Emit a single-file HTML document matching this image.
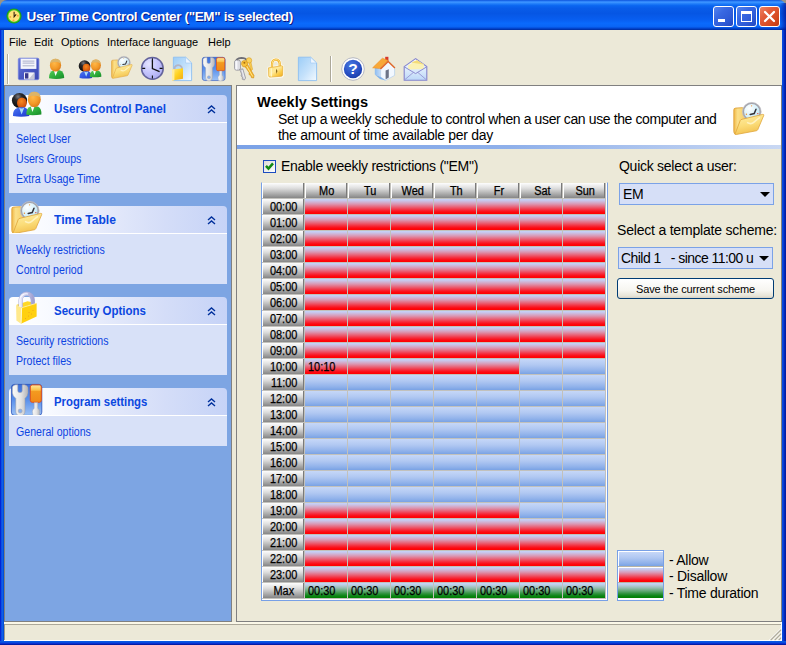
<!DOCTYPE html><html lang="en"><head><meta charset="utf-8"><title>User Time Control Center</title><style>
*{box-sizing:border-box;margin:0;padding:0}
html,body{width:786px;height:645px;overflow:hidden;background:#ECE9D8}
body{position:relative;font-family:"Liberation Sans", "DejaVu Sans", sans-serif;font-size:11px;color:#000}
.abs{position:absolute}
#corner{position:absolute;left:0;top:0;width:786px;height:10px;background:#9a9384}
#title{position:absolute;left:0;top:0;width:786px;height:30px;border-radius:7px 7px 0 0;
 background:linear-gradient(to bottom,#0a50d8 0%,#2c80f8 4%,#3a93ff 8%,#1e7cf8 13%,#0a66f0 19%,#085ce8 28%,#0656e4 45%,#085ef0 65%,#0a6afc 78%,#0a66f6 88%,#0450de 93%,#0038b8 97%,#002c9c 100%);}
#title .t{position:absolute;left:26.5px;top:9px;font-weight:bold;font-size:13.5px;line-height:16px;color:#fff;white-space:nowrap;text-shadow:1px 1px 0 #0a1883;letter-spacing:-0.36px}
.bl{position:absolute;left:0;top:30px;width:4px;height:611px;background:linear-gradient(to right,#0019cf 0,#0831d9 25%,#166aee 50%,#0855dd 75%,#0048cf 100%)}
.br{position:absolute;left:782px;top:30px;width:4px;height:611px;background:linear-gradient(to right,#0950e2 0,#063ed4 35%,#0426b6 65%,#001a9c 100%)}
.bb{position:absolute;left:0;top:641px;width:786px;height:4px;background:linear-gradient(to bottom,#0a5ae8 0,#0855dd 30%,#0831d9 60%,#00138c 100%)}
.wb{position:absolute;top:6px;width:21px;height:21px;border:1px solid #fff;border-radius:3px;
 background:linear-gradient(135deg,#5484ee 0,#3868e2 35%,#2e5ad6 70%,#2246c0 100%)}
.wb.close{background:linear-gradient(135deg,#ee8262 0,#e25c3a 35%,#d64a20 70%,#c23a10 100%)}
.menu span{position:absolute;top:36px;line-height:13px;font-size:11px;white-space:nowrap}
.tbi{position:absolute}
#side{position:absolute;left:4px;top:85px;width:228px;height:537px;background:#7da5e3;border-left:1px solid #808080;border-top:1px solid #808080;border-right:1px solid #808080;border-bottom:1px solid #808080}
.ph{position:absolute;left:9px;width:218px;height:27px;border-radius:4px 4px 0 0;background:linear-gradient(to right,#ffffff 0,#f8faff 18%,#e6ebfb 42%,#d4ddf8 72%,#c6d3f7 100%)}
.ph b{position:absolute;left:45px;top:7px;font-size:12.5px;line-height:15px;color:#0c48e0;white-space:nowrap;transform:scaleX(.937);transform-origin:0 0}
.pb{position:absolute;left:9px;width:218px;background:#d8e1f8;border-top:1px solid #fff}
.lk{position:absolute;left:16px;font-size:12.5px;line-height:14px;color:#0c44e2;white-space:nowrap;transform:scaleX(.848);transform-origin:0 0}
.chev{position:absolute;left:198px;top:10px}
#main{position:absolute;left:236px;top:85px;width:546px;height:537px;border:1px solid #808080;background:#ECE9D8}
#hdr{position:absolute;left:237px;top:86px;width:544px;height:59px;background:#fff}
#hbar{position:absolute;left:237px;top:145px;width:544px;height:4px;background:linear-gradient(to right,#7ba2e7 0,#8fb0ea 50%,#c9d8f3 100%)}
.h1{position:absolute;left:257px;top:95px;font-weight:bold;font-size:14px;line-height:15px;white-space:nowrap;transform:scaleX(1.036);transform-origin:0 0}
.h2{position:absolute;left:278px;font-size:14px;line-height:15px;white-space:nowrap;letter-spacing:-.35px}
.lbl{position:absolute;font-size:14px;line-height:15px;white-space:nowrap;letter-spacing:-.27px}
#grid{position:absolute;left:261px;top:182px;width:347px;height:419px;background:#c2c1bc;border:1px solid #78a0e6;border-top-color:#ECE9D8}
.c{position:absolute;width:42px;height:15px;font-size:12.5px;line-height:17px;white-space:nowrap;overflow:hidden}
.c span{display:inline-block;transform:scaleX(.875);transform-origin:50% 50%;-webkit-text-stroke:.25px #000}
.c.t span{transform-origin:0 50%}
.h{background:linear-gradient(to bottom,#fdfdfd 0,#dedede 35%,#a8a8a8 75%,#868686 100%);text-align:center;padding-left:2px;box-shadow:inset 1px 0 0 #fff,inset -1px 0 0 #7a7a7a}
.r{background:linear-gradient(to bottom,#c4d4fa 0,#c9c4e8 12%,#da98b4 33%,#e96074 54%,#f52c3c 72%,#fd0810 87%,#ff0000 100%)}
.b{background:linear-gradient(to bottom,#c6d7f8 0,#b1c8f2 40%,#8fb1ea 80%,#79a2e4 100%)}
.g{background:linear-gradient(to bottom,#c4d4fa 0,#bccfe6 12%,#96bdb0 33%,#60a772 54%,#2c913a 72%,#0a8412 87%,#008000 100%)}
.c.t{padding-left:3px}
.combo{position:absolute;height:22px;background:#d6dff7;border:1px solid #7ba2e7;font-size:14px;line-height:20px;letter-spacing:-.27px;padding-left:3px;white-space:nowrap;overflow:hidden}
.arr{position:absolute;width:0;height:0;border-left:5px solid transparent;border-right:5px solid transparent;border-top:5px solid #000}
.btn{position:absolute;left:617px;top:278px;width:157px;height:21px;border:1px solid #003c74;border-radius:3px;background:linear-gradient(to bottom,#ffffff 0,#f6f5f0 60%,#e6e3d6 90%,#d6d0c5 100%);text-align:center;font-size:11px;line-height:21px;white-space:nowrap;letter-spacing:-.14px}
#legend{position:absolute;left:617px;top:550px;width:47px;height:51px;border:1px solid #78a0e6;background:#fff}
</style></head><body>
<svg width="0" height="0" style="position:absolute"><defs>
<linearGradient id="gGold" x1="0" y1="0" x2="1" y2="1"><stop offset="0" stop-color="#ffe98a"/><stop offset=".5" stop-color="#ffd21e"/><stop offset="1" stop-color="#f0a818"/></linearGradient>
<linearGradient id="gFold" x1="0" y1="0" x2="0.3" y2="1"><stop offset="0" stop-color="#fff0a8"/><stop offset=".6" stop-color="#fbdc78"/><stop offset="1" stop-color="#f3c352"/></linearGradient>
<linearGradient id="gFoldB" x1="0" y1="0" x2="1" y2="0"><stop offset="0" stop-color="#f0b848"/><stop offset=".35" stop-color="#fbe08a"/><stop offset="1" stop-color="#f6cf68"/></linearGradient>
<radialGradient id="gFace" cx=".4" cy=".35" r=".7"><stop offset="0" stop-color="#ffb848"/><stop offset=".6" stop-color="#f39a28"/><stop offset="1" stop-color="#d87818"/></radialGradient>
<radialGradient id="gFaceD" cx=".45" cy=".35" r=".75"><stop offset="0" stop-color="#f88a20"/><stop offset=".6" stop-color="#d85c10"/><stop offset="1" stop-color="#a83808"/></radialGradient>
<linearGradient id="gGreen" x1="0" y1="0" x2="1" y2="1"><stop offset="0" stop-color="#58cc58"/><stop offset=".6" stop-color="#28a838"/><stop offset="1" stop-color="#188828"/></linearGradient>
<linearGradient id="gBlueB" x1="0" y1="0" x2="1" y2="1"><stop offset="0" stop-color="#5078f0"/><stop offset=".6" stop-color="#2c50e0"/><stop offset="1" stop-color="#2038c0"/></linearGradient>
<radialGradient id="gHair" cx=".4" cy=".25" r=".7"><stop offset="0" stop-color="#7a7a80"/><stop offset=".35" stop-color="#2a2a2c"/><stop offset="1" stop-color="#0c0c0c"/></radialGradient>
<linearGradient id="gTool" x1="0" y1="0" x2="0" y2="1"><stop offset="0" stop-color="#3a6edc"/><stop offset=".5" stop-color="#5a90ea"/><stop offset="1" stop-color="#9cc2f6"/></linearGradient>
<linearGradient id="gSilver" x1="0" y1="0" x2="1" y2="0"><stop offset="0" stop-color="#fafafa"/><stop offset=".55" stop-color="#e4e4e4"/><stop offset="1" stop-color="#b4b4b8"/></linearGradient>
<linearGradient id="gOrange" x1="0" y1="0" x2="0" y2="1"><stop offset="0" stop-color="#ffe9a0"/><stop offset=".3" stop-color="#fbc048"/><stop offset=".38" stop-color="#f39a20"/><stop offset="1" stop-color="#f08818"/></linearGradient>
<linearGradient id="gDoc" x1="0" y1="0" x2="1" y2="1"><stop offset="0" stop-color="#9ccdf7"/><stop offset=".55" stop-color="#c6e2fb"/><stop offset="1" stop-color="#f4faff"/></linearGradient>
<radialGradient id="gClk" cx=".35" cy=".3" r=".8"><stop offset="0" stop-color="#e4e4ff"/><stop offset=".5" stop-color="#c4c4fc"/><stop offset="1" stop-color="#a8a8ee"/></radialGradient>
<radialGradient id="gClk2" cx=".35" cy=".3" r=".8"><stop offset="0" stop-color="#ffffff"/><stop offset=".6" stop-color="#d4f0fa"/><stop offset="1" stop-color="#a8dcf0"/></radialGradient>
<radialGradient id="gHelp" cx=".4" cy=".3" r=".8"><stop offset="0" stop-color="#4878e0"/><stop offset=".6" stop-color="#2850c4"/><stop offset="1" stop-color="#1838a0"/></radialGradient>
<linearGradient id="gSave" x1="0" y1="0" x2="1" y2="1"><stop offset="0" stop-color="#6878dc"/><stop offset=".5" stop-color="#4858c4"/><stop offset="1" stop-color="#3c48b0"/></linearGradient>
<linearGradient id="gMail" x1="0" y1="0" x2="0" y2="1"><stop offset="0" stop-color="#ffffff"/><stop offset="1" stop-color="#bcd8f8"/></linearGradient>
<linearGradient id="gWall" x1="0" y1="0" x2="1" y2="0"><stop offset="0" stop-color="#8cbcf0"/><stop offset="1" stop-color="#c4dcf8"/></linearGradient>
<linearGradient id="gShk" x1="0" y1="0" x2="1" y2="0"><stop offset="0" stop-color="#e6e6f8"/><stop offset=".5" stop-color="#c4c4e8"/><stop offset="1" stop-color="#a2a2d2"/></linearGradient>
<linearGradient id="gGold2" x1="0" y1="0" x2="1" y2="1"><stop offset="0" stop-color="#ffe27a"/><stop offset=".45" stop-color="#ffe99a"/><stop offset=".7" stop-color="#fbcc48"/><stop offset="1" stop-color="#eeaa24"/></linearGradient>
</defs></svg>
<div id="corner"></div>
<div id="title">
<div class="abs" style="left:5.8px;top:7.6px"><svg width="16" height="16" viewBox="0 0 15 15.4" style="display:block;overflow:visible"><circle cx="7.5" cy="7.7" r="7.3" fill="#1e9a12"/><circle cx="7.5" cy="7.7" r="6.4" fill="#3cc428"/><circle cx="7.5" cy="7.7" r="5.5" fill="#ffe27a"/><circle cx="3.9" cy="8.6" r=".9" fill="#f8a838"/><circle cx="11.2" cy="7.4" r=".9" fill="#f8a838"/><circle cx="7" cy="12" r="1" fill="#f8a838"/><path d="M7.6 3.6L7.6 8.6L9.6 6.2" stroke="#2a1a08" stroke-width="1" fill="none"/></svg></div>
<div class="t">User Time Control Center ("EM" is selected)</div>
<div class="wb" style="left:713px"><svg width="19" height="19" viewBox="0 0 19 19" style="display:block;overflow:visible"><rect x="4" y="12" width="7" height="3" fill="#fff"/></svg></div>
<div class="wb" style="left:736px"><svg width="19" height="19" viewBox="0 0 19 19" style="display:block;overflow:visible"><rect x="4.5" y="4.5" width="10" height="10" fill="none" stroke="#fff" stroke-width="1"/><rect x="4" y="4" width="11" height="3" fill="#fff"/></svg></div>
<div class="wb close" style="left:759px"><svg width="19" height="19" viewBox="0 0 19 19" style="display:block;overflow:visible"><path d="M5 5l9 9M14 5l-9 9" stroke="#fff" stroke-width="2.3" stroke-linecap="round"/></svg></div>
</div>
<div class="abs" style="left:780px;top:3px;width:6px;height:27px;background:linear-gradient(to right,rgba(0,20,150,0),rgba(0,20,150,.75))"></div>
<div class="bl"></div><div class="br"></div><div class="bb"></div>
<div class="menu">
<span style="left:9px">File</span>
<span style="left:34px">Edit</span>
<span style="left:61px">Options</span>
<span style="left:107px">Interface language</span>
<span style="left:208px">Help</span>
</div>
<div class="abs" style="left:7px;top:54px;width:2px;height:30px;border-left:1px solid #b0ad9c;border-right:1px solid #fff"></div>
<div class="tbi" style="left:17px;top:56px"><svg width="24" height="24" viewBox="0 0 24 24" style="display:block;overflow:visible"><rect x="1.3" y="2.2" width="20.6" height="21.5" rx="1.4" fill="url(#gSave)" stroke="#7080e0" stroke-width=".8"/><rect x="3.6" y="2.7" width="15.8" height="10.2" fill="#f4f5fc"/><path d="M5.6 5.2H17.4M5.6 7.2H17.4" stroke="#b8bcd4" stroke-width="1.2"/><path d="M5.6 9.8H17.4" stroke="#9aa0bc" stroke-width=".8"/><rect x="7" y="16.4" width="10.4" height="7" fill="#f2f2f8"/><rect x="8" y="17.2" width="3.4" height="5.4" fill="#38388c"/><path d="M11.4 23.4L17.4 16.4L17.4 23.4Z" fill="#c4c6d6"/></svg></div>
<div class="tbi" style="left:45px;top:56px"><svg width="24" height="24" viewBox="0 0 24 24" style="display:block;overflow:visible"><path d="M4 22.2Q3.6 15.8 9 14.2L14.6 14.2Q19.4 15.8 19.2 22Q11.6 23.8 4 22.2Z" fill="url(#gGreen)"/><path d="M8.8 14.4L10.6 20L12.8 14.4Z" fill="#fff"/><ellipse cx="10.5" cy="9.2" rx="5.6" ry="6.4" fill="url(#gFace)"/><path d="M5 7.6Q5.6 2.8 10.5 2.8Q15.5 2.8 16 7.8Q13 5.4 10.4 6.2Q7.6 5.4 5 7.6Z" fill="#dcb468"/></svg></div>
<div class="tbi" style="left:77.6px;top:58px"><svg width="24.6" height="21.5" viewBox="0 0 32 28" style="display:block;overflow:visible"><ellipse cx="8.5" cy="10.4" rx="7.6" ry="7.4" fill="url(#gHair)"/><ellipse cx="10.9" cy="13" rx="4.9" ry="5.6" fill="url(#gFaceD)"/><path d="M2 26Q1.6 19.5 6.5 18L9 17.2L13.5 17.2Q18.2 19 18.3 26Q10 27.6 2 26Z" fill="url(#gBlueB)"/><path d="M8 17.6L10.6 24.4L13.3 17.6Q10.6 19.4 8 17.6Z" fill="#a8dcf8"/><path d="M15.4 24.8Q15 18.2 19.6 16.6L27 16.6Q30.6 18.4 30.4 24.4Q23 25.8 15.4 24.8Z" fill="url(#gGreen)"/><path d="M19.8 16.8L21.4 22L23.4 16.8Z" fill="#fff"/><ellipse cx="23.3" cy="9.5" rx="6.5" ry="7.7" fill="url(#gFace)"/><path d="M17 7.6Q17.6 1.8 23.3 1.8Q29.2 1.8 29.7 7.8Q26 4.8 23.2 6Q20 4.8 17 7.6Z" fill="#dcb468"/></svg></div>
<div class="tbi" style="left:110.6px;top:55.6px"><svg width="22" height="22.7" viewBox="0 0 32 33" style="display:block;overflow:visible"><path d="M0.8 8Q0.7 6.2 2.6 6.1L9.2 5.7Q10.6 5.7 10.8 7L12 9L12 22L2.3 32.4Q0.8 31.4 0.8 29.4Z" fill="url(#gFoldB)" stroke="#dc9c30" stroke-width=".8"/><circle cx="18.8" cy="9.8" r="8.6" fill="url(#gClk2)" stroke="#a4a4ac" stroke-width="1.8"/><circle cx="18.8" cy="9.8" r="9.4" fill="none" stroke="#c8c8cc" stroke-width=".6"/><path d="M17.2 12.4L21.2 11.6L23 7.2" stroke="#33333a" stroke-width="1.5" fill="none" stroke-linecap="round"/><circle cx="13.4" cy="12.2" r=".7" fill="#f09030"/><circle cx="24.8" cy="11.6" r=".7" fill="#e84030"/><circle cx="18.6" cy="3.8" r=".6" fill="#f09030"/><path d="M7.2 18.6Q7.6 17.6 9 17.3L29.6 12.4Q31.2 12.2 30.7 13.6L24.8 27.6Q24.4 28.6 23.2 28.8L3.2 32.5Q1.8 32.6 2.3 31.4Z" fill="url(#gFold)" stroke="#e0a438" stroke-width=".8"/><path d="M14 20.4Q18 23 21 20.2Q24 17.4 27 15.4" stroke="#fff6d0" stroke-width="1.6" fill="none" opacity=".8"/></svg></div>
<div class="tbi" style="left:140px;top:56px"><svg width="24" height="24" viewBox="0 0 24 24" style="display:block;overflow:visible"><circle cx="12.4" cy="12.4" r="10.8" fill="url(#gClk)" stroke="#64649c" stroke-width="1.5"/><path d="M12.4 2.2V5.2M12.4 19.6V22.6M2.2 12.4H5.2M19.6 12.4H22.6" stroke="#111" stroke-width="1.1"/><path d="M12.4 4.6V12.6L19.6 15.6" stroke="#111" stroke-width="1.3" fill="none"/></svg></div>
<div class="tbi" style="left:171.2px;top:56px"><svg width="21" height="26" viewBox="0 0 21 26" style="display:block;overflow:visible"><g transform="translate(1 0)"><path d="M1.4 1.2L13.6 1.2L19.6 7L19.6 24.6L1.4 24.6Z" fill="url(#gDoc)" stroke="#8cc0f2" stroke-width=".9"/><path d="M13.6 1.2L13.6 7L19.6 7Z" fill="#eef6ff" stroke="#9cc8f4" stroke-width=".6"/></g><path d="M3.6 13.4L3.6 11.4A4 4.2 0 0 1 10.8 11.4L10.8 13.4" stroke="#b4b4c4" stroke-width="1.8" fill="none"/><path d="M1 13.6L12 12.2L12 22.8L1 24.6Z" fill="url(#gGold)"/><path d="M1 13.6L3.4 13.3L3.4 24.2L1 24.6Z" fill="#ffec9c"/></svg></div>
<div class="tbi" style="left:201.7px;top:56.6px"><svg width="24" height="24" viewBox="0 0 32 32" style="display:block;overflow:visible"><rect x=".4" y=".4" width="30.4" height="31" rx="3.2" fill="url(#gTool)" stroke="#2a50b8" stroke-width=".8"/><path d="M1.4 3Q2.2 1 4.6 .8L6.8 .8L6.8 7Q7 8.6 9 8.6Q11 8.6 11.2 7L11.2 .8L13.6 .8Q16.4 1.2 17 3.6L17 9Q16.8 12 14 14.4L14 27Q14 31.8 9.4 31.9Q4.8 31.8 4.8 27L4.8 14.4Q1.6 12 1.4 9Z" fill="url(#gSilver)" stroke="#9a9aa0" stroke-width=".5"/><circle cx="9.2" cy="27" r="2" fill="#88b0ee" stroke="#a8a8ac" stroke-width=".6"/><rect x="19.3" y=".9" width="11" height="17.4" rx="2" fill="url(#gOrange)" stroke="#e4501a" stroke-width="1"/><path d="M23.2 18.6L26.8 18.6L26.8 24.4Q28.8 25.4 28.8 27.4L28.2 31.4Q25 32.4 22 31.4L21.4 27.4Q21.4 25.4 23.2 24.4Z" fill="url(#gSilver)" stroke="#a0a0a6" stroke-width=".4"/></svg></div>
<div class="tbi" style="left:232px;top:56px"><svg width="24" height="24" viewBox="0 0 24 24" style="display:block;overflow:visible"><path d="M3.4 7.2Q3.6 2.2 9.4 1.9Q13.6 2 15 4.6" stroke="#6e6e76" stroke-width="1.7" fill="none"/><path d="M16.2 3.4L18.2 3L20.6 13.4L19 14.6Z" fill="#f9cc50" stroke="#d89c20" stroke-width=".5"/><circle cx="17" cy="4.4" r="2.7" fill="#fbd25c" stroke="#d89c20" stroke-width=".6"/><rect x="2.5" y="4.2" width="6" height="10" rx="2" fill="#dcdce2" stroke="#8a8a92" stroke-width=".7"/><rect x="3.4" y="4.6" width="2" height="9" rx="1" fill="#f8f8fc"/><path d="M7.6 13.4L10.8 12.8L13.6 22L12.4 24L10.2 23.2L10.4 21L9 20L9.6 18Z" fill="#c8c8d0" stroke="#85858e" stroke-width=".6"/><path d="M10 14L12.4 22.6" stroke="#f4f4f8" stroke-width=".9"/><path d="M12.6 10L15.6 8.4L22 19.6L21.6 22L19.4 21.6L18.8 19.4L17 18.6L17.2 16.6Z" fill="#f6b62c" stroke="#cf8c14" stroke-width=".6"/><path d="M14.6 10L20.8 20.6" stroke="#ffe58c" stroke-width="1"/><path d="M9.6 8.4Q9 4.6 12.4 4.4Q15.8 4.6 15.6 8.2L13.4 11L10.8 10.6Z" fill="#f8c23c" stroke="#cf8c14" stroke-width=".6"/><circle cx="12.4" cy="6.8" r="1" fill="#a86c10"/></svg></div>
<div class="tbi" style="left:264.5px;top:57.3px"><svg width="22" height="24" viewBox="0 0 22 24" style="display:block;overflow:visible"><g transform="translate(1.6 1.2) scale(.86)"><path d="M2 10.8L17.4 8.4Q19.4 8.6 19.4 10.4L19.2 19.8Q18.8 21.6 17 21.8L4 22.8Q2 22.6 1.8 20.8Z" fill="#fffdf0" stroke="#fffdf0" stroke-width="2" opacity=".9"/><path d="M6.2 10.4L6.4 6.4A4.4 4.6 0 0 1 15.2 6L15.4 9.4" stroke="#fffdf0" stroke-width="4.4" fill="none" opacity=".9"/><path d="M6.2 10.4L6.4 6.4A4.4 4.6 0 0 1 15.2 6L15.4 9.4" stroke="#eeb02c" stroke-width="2.7" fill="none"/><path d="M6.2 10.4L6.4 6.4A4.4 4.6 0 0 1 15.2 6L15.4 9.4" stroke="#ffe694" stroke-width="1" fill="none"/><path d="M2.2 11.2L17.6 8.8Q18.8 8.8 18.8 10L18.6 19.6Q18.4 20.8 17.2 21L4 22Q2.6 22 2.4 20.6Z" fill="url(#gGold2)" stroke="#e2a224" stroke-width=".7"/><path d="M5.4 11.6L5.6 21.2" stroke="#fff6c8" stroke-width="1.5"/><path d="M11.6 12.4L12.5 15L11.8 18.4L10.9 15Z" fill="#7a5a10"/></g></svg></div>
<div class="tbi" style="left:297px;top:56px"><svg width="21" height="26" viewBox="0 0 21 26" style="display:block;overflow:visible"><path d="M1.4 1.2L13.6 1.2L19.6 7L19.6 24.6L1.4 24.6Z" fill="url(#gDoc)" stroke="#8cc0f2" stroke-width=".9"/><path d="M13.6 1.2L13.6 7L19.6 7Z" fill="#eef6ff" stroke="#9cc8f4" stroke-width=".6"/></svg></div>
<div class="tbi" style="left:340.6px;top:56.8px"><svg width="24" height="24" viewBox="0 0 24 24" style="display:block;overflow:visible"><circle cx="12" cy="12" r="11.3" fill="#fff" stroke="#a4a8b8" stroke-width=".8"/><circle cx="12" cy="12" r="9.2" fill="url(#gHelp)"/><text x="12" y="17.4" text-anchor="middle" font-family="Liberation Sans, sans-serif" font-weight="bold" font-size="15.5" fill="#fff">?</text></svg></div>
<div class="tbi" style="left:372px;top:56px"><svg width="24" height="25" viewBox="0 0 24 25" style="display:block;overflow:visible"><rect x="13.2" y=".8" width="3.2" height="6.4" fill="#d83828"/><path d="M2.8 11.4L8.6 10.6L8.6 21L2.8 18.4Z" fill="url(#gWall)"/><path d="M8.6 10.6L16 5L22.6 11.4L22.6 19.4L13.6 24.4L8.6 21Z" fill="#f2f8ff" stroke="#9cc0ec" stroke-width=".5"/><path d="M2.8 18.4L8.6 21L13.6 24.4L8 23Z" fill="#7cb0ec"/><path d="M.6 11.8L10.4 2.2L16.2 4.4L7.8 12.6Z" fill="#f8a838" stroke="#e88820" stroke-width=".5"/><path d="M7.8 12.6L16.2 4.4L23.4 11.6L22.4 12.6L16.2 6.6L9 13.4Z" fill="#e06828"/><path d="M13.6 14.4L16.8 13.2L16.8 21.6L13.6 23.4Z" fill="#6c7488"/></svg></div>
<div class="tbi" style="left:402.5px;top:57px"><svg width="25" height="24" viewBox="0 0 25 24" style="display:block;overflow:visible"><path d="M1.2 9.6L12.6 1.6L23.8 9.6L23.8 23.2L1.2 23.2Z" fill="url(#gMail)" stroke="#8484cc" stroke-width="1.1"/><path d="M5 8.6L14 3.2L21 7.6L20.6 12L5.4 12.6Z" fill="#fbf2b4"/><path d="M8 5.6L14 3.2L21 7.6Z" fill="#f4dc78"/><path d="M1.2 9.8L12.6 16.6L23.8 9.8" stroke="#8c8cd0" stroke-width="1" fill="none"/><path d="M1.2 23.2L10.4 15.4M23.8 23.2L14.8 15.4" stroke="#9c9cd8" stroke-width="1" fill="none"/></svg></div>
<div class="abs" style="left:330px;top:56px;width:2px;height:26px;border-left:1px solid #aca899;border-right:1px solid #fff"></div>
<div id="side"></div>
<div class="ph" style="top:95px"><b>Users Control Panel</b><div class="chev"><svg width="9" height="9" viewBox="0 0 9 9" style="display:block;overflow:visible"><path d="M1 4l3.5-3l3.5 3M1 8l3.5-3l3.5 3" stroke="#00309c" stroke-width="1.4" fill="none"/></svg></div></div>
<div class="abs" style="left:11px;top:90px"><svg width="32" height="28" viewBox="0 0 32 28" style="display:block;overflow:visible"><ellipse cx="8.5" cy="10.4" rx="7.6" ry="7.4" fill="url(#gHair)"/><ellipse cx="10.9" cy="13" rx="4.9" ry="5.6" fill="url(#gFaceD)"/><path d="M2 26Q1.6 19.5 6.5 18L9 17.2L13.5 17.2Q18.2 19 18.3 26Q10 27.6 2 26Z" fill="url(#gBlueB)"/><path d="M8 17.6L10.6 24.4L13.3 17.6Q10.6 19.4 8 17.6Z" fill="#a8dcf8"/><path d="M15.4 24.8Q15 18.2 19.6 16.6L27 16.6Q30.6 18.4 30.4 24.4Q23 25.8 15.4 24.8Z" fill="url(#gGreen)"/><path d="M19.8 16.8L21.4 22L23.4 16.8Z" fill="#fff"/><ellipse cx="23.3" cy="9.5" rx="6.5" ry="7.7" fill="url(#gFace)"/><path d="M17 7.6Q17.6 1.8 23.3 1.8Q29.2 1.8 29.7 7.8Q26 4.8 23.2 6Q20 4.8 17 7.6Z" fill="#dcb468"/></svg></div>
<div class="pb" style="top:122px;height:71px"></div>
<div class="lk" style="top:132px">Select User</div>
<div class="lk" style="top:152px">Users Groups</div>
<div class="lk" style="top:172px">Extra Usage Time</div>
<div class="ph" style="top:206px"><b style="transform:scaleX(0.965)">Time Table</b><div class="chev"><svg width="9" height="9" viewBox="0 0 9 9" style="display:block;overflow:visible"><path d="M1 4l3.5-3l3.5 3M1 8l3.5-3l3.5 3" stroke="#00309c" stroke-width="1.4" fill="none"/></svg></div></div>
<div class="abs" style="left:11px;top:201px"><svg width="32" height="33" viewBox="0 0 32 33" style="display:block;overflow:visible"><path d="M0.8 8Q0.7 6.2 2.6 6.1L9.2 5.7Q10.6 5.7 10.8 7L12 9L12 22L2.3 32.4Q0.8 31.4 0.8 29.4Z" fill="url(#gFoldB)" stroke="#dc9c30" stroke-width=".8"/><circle cx="18.8" cy="9.8" r="8.6" fill="url(#gClk2)" stroke="#a4a4ac" stroke-width="1.8"/><circle cx="18.8" cy="9.8" r="9.4" fill="none" stroke="#c8c8cc" stroke-width=".6"/><path d="M17.2 12.4L21.2 11.6L23 7.2" stroke="#33333a" stroke-width="1.5" fill="none" stroke-linecap="round"/><circle cx="13.4" cy="12.2" r=".7" fill="#f09030"/><circle cx="24.8" cy="11.6" r=".7" fill="#e84030"/><circle cx="18.6" cy="3.8" r=".6" fill="#f09030"/><path d="M7.2 18.6Q7.6 17.6 9 17.3L29.6 12.4Q31.2 12.2 30.7 13.6L24.8 27.6Q24.4 28.6 23.2 28.8L3.2 32.5Q1.8 32.6 2.3 31.4Z" fill="url(#gFold)" stroke="#e0a438" stroke-width=".8"/><path d="M14 20.4Q18 23 21 20.2Q24 17.4 27 15.4" stroke="#fff6d0" stroke-width="1.6" fill="none" opacity=".8"/></svg></div>
<div class="pb" style="top:233px;height:51px"></div>
<div class="lk" style="top:243px">Weekly restrictions</div>
<div class="lk" style="top:263px">Control period</div>
<div class="ph" style="top:297px"><b style="transform:scaleX(0.919)">Security Options</b><div class="chev"><svg width="9" height="9" viewBox="0 0 9 9" style="display:block;overflow:visible"><path d="M1 4l3.5-3l3.5 3M1 8l3.5-3l3.5 3" stroke="#00309c" stroke-width="1.4" fill="none"/></svg></div></div>
<div class="abs" style="left:11px;top:292px"><svg width="32" height="33" viewBox="0 0 32 33" style="display:block;overflow:visible"><path d="M5.1 12.9L16.5 9.3L25.6 11.3L11 15.8Z" fill="#ffd828"/><path d="M9.6 15.2L9.6 8.4A6.1 6.6 0 0 1 21.8 8.2L21.8 12.6" stroke="#a8a8d4" stroke-width="4.2" fill="none"/><path d="M9.6 15.2L9.6 8.4A6.1 6.6 0 0 1 21.8 8.2L21.8 12.6" stroke="url(#gShk)" stroke-width="3.4" fill="none"/><path d="M8.8 15L8.8 8.4A6.4 6.9 0 0 1 17 2" stroke="#f8f8ff" stroke-width="1.1" fill="none"/><path d="M5.1 12.9L11 16L10 31.8L5.4 28.4Z" fill="#ffe98c"/><path d="M11 15.6L25.6 11.3L25.6 24.6L10 31.8Z" fill="#ffd010"/><path d="M11 15.6L25.6 11.3" stroke="#fff2a8" stroke-width=".8"/><path d="M10.6 16L10 31.8" stroke="#fff8d0" stroke-width="1"/><circle cx="14.5" cy="26.5" r=".5" fill="#f09820"/><circle cx="17.5" cy="24" r=".5" fill="#f09820"/><circle cx="20.5" cy="22" r=".5" fill="#f09820"/><circle cx="22" cy="18.5" r=".5" fill="#f09820"/><circle cx="18" cy="20.5" r=".5" fill="#f09820"/></svg></div>
<div class="pb" style="top:324px;height:51px"></div>
<div class="lk" style="top:334px">Security restrictions</div>
<div class="lk" style="top:354px">Protect files</div>
<div class="ph" style="top:388px"><b style="transform:scaleX(0.908)">Program settings</b><div class="chev"><svg width="9" height="9" viewBox="0 0 9 9" style="display:block;overflow:visible"><path d="M1 4l3.5-3l3.5 3M1 8l3.5-3l3.5 3" stroke="#00309c" stroke-width="1.4" fill="none"/></svg></div></div>
<div class="abs" style="left:11px;top:383.5px"><svg width="32" height="32" viewBox="0 0 32 32" style="display:block;overflow:visible"><rect x=".4" y=".4" width="30.4" height="31" rx="3.2" fill="url(#gTool)" stroke="#2a50b8" stroke-width=".8"/><path d="M1.4 3Q2.2 1 4.6 .8L6.8 .8L6.8 7Q7 8.6 9 8.6Q11 8.6 11.2 7L11.2 .8L13.6 .8Q16.4 1.2 17 3.6L17 9Q16.8 12 14 14.4L14 27Q14 31.8 9.4 31.9Q4.8 31.8 4.8 27L4.8 14.4Q1.6 12 1.4 9Z" fill="url(#gSilver)" stroke="#9a9aa0" stroke-width=".5"/><circle cx="9.2" cy="27" r="2" fill="#88b0ee" stroke="#a8a8ac" stroke-width=".6"/><rect x="19.3" y=".9" width="11" height="17.4" rx="2" fill="url(#gOrange)" stroke="#e4501a" stroke-width="1"/><path d="M23.2 18.6L26.8 18.6L26.8 24.4Q28.8 25.4 28.8 27.4L28.2 31.4Q25 32.4 22 31.4L21.4 27.4Q21.4 25.4 23.2 24.4Z" fill="url(#gSilver)" stroke="#a0a0a6" stroke-width=".4"/></svg></div>
<div class="pb" style="top:415px;height:31px"></div>
<div class="lk" style="top:425px">General options</div>
<div id="main"></div><div id="hdr"></div><div id="hbar"></div>
<div class="h1">Weekly Settings</div>
<div class="h2" style="top:112px;letter-spacing:-.385px">Set up a weekly schedule to control when a user can use the computer and</div>
<div class="h2" style="top:128px;letter-spacing:-.3px">the amount of time available per day</div>
<div class="abs" style="left:732.5px;top:101.5px"><svg width="32" height="33" viewBox="0 0 32 33" style="display:block;overflow:visible"><path d="M0.8 8Q0.7 6.2 2.6 6.1L9.2 5.7Q10.6 5.7 10.8 7L12 9L12 22L2.3 32.4Q0.8 31.4 0.8 29.4Z" fill="url(#gFoldB)" stroke="#dc9c30" stroke-width=".8"/><circle cx="18.8" cy="9.8" r="8.6" fill="url(#gClk2)" stroke="#a4a4ac" stroke-width="1.8"/><circle cx="18.8" cy="9.8" r="9.4" fill="none" stroke="#c8c8cc" stroke-width=".6"/><path d="M17.2 12.4L21.2 11.6L23 7.2" stroke="#33333a" stroke-width="1.5" fill="none" stroke-linecap="round"/><circle cx="13.4" cy="12.2" r=".7" fill="#f09030"/><circle cx="24.8" cy="11.6" r=".7" fill="#e84030"/><circle cx="18.6" cy="3.8" r=".6" fill="#f09030"/><path d="M7.2 18.6Q7.6 17.6 9 17.3L29.6 12.4Q31.2 12.2 30.7 13.6L24.8 27.6Q24.4 28.6 23.2 28.8L3.2 32.5Q1.8 32.6 2.3 31.4Z" fill="url(#gFold)" stroke="#e0a438" stroke-width=".8"/><path d="M14 20.4Q18 23 21 20.2Q24 17.4 27 15.4" stroke="#fff6d0" stroke-width="1.6" fill="none" opacity=".8"/></svg></div>
<div class="abs" style="left:263px;top:160px;width:13px;height:13px;border:1px solid #1c4cc0;background:linear-gradient(135deg,#dcdcd7,#fff)"><svg width="11" height="11" viewBox="0 0 11 11" style="display:block;overflow:visible"><path d="M2 4.8l2.5 2.8l4.5-5.2" stroke="#128a12" stroke-width="2.5" fill="none"/></svg></div>
<div class="lbl" style="left:281px;top:159px">Enable weekly restrictions ("EM")</div>
<div id="grid">
<div class="c h" style="left:0px;top:0px"></div>
<div class="c h" style="left:43px;top:0px"><span>Mo</span></div>
<div class="c h" style="left:86px;top:0px"><span>Tu</span></div>
<div class="c h" style="left:129px;top:0px"><span>Wed</span></div>
<div class="c h" style="left:172px;top:0px"><span>Th</span></div>
<div class="c h" style="left:215px;top:0px"><span>Fr</span></div>
<div class="c h" style="left:258px;top:0px"><span>Sat</span></div>
<div class="c h" style="left:301px;top:0px"><span>Sun</span></div>
<div class="c h" style="left:0px;top:16px"><span>00:00</span></div>
<div class="c r" style="left:43px;top:16px"></div>
<div class="c r" style="left:86px;top:16px"></div>
<div class="c r" style="left:129px;top:16px"></div>
<div class="c r" style="left:172px;top:16px"></div>
<div class="c r" style="left:215px;top:16px"></div>
<div class="c r" style="left:258px;top:16px"></div>
<div class="c r" style="left:301px;top:16px"></div>
<div class="c h" style="left:0px;top:32px"><span>01:00</span></div>
<div class="c r" style="left:43px;top:32px"></div>
<div class="c r" style="left:86px;top:32px"></div>
<div class="c r" style="left:129px;top:32px"></div>
<div class="c r" style="left:172px;top:32px"></div>
<div class="c r" style="left:215px;top:32px"></div>
<div class="c r" style="left:258px;top:32px"></div>
<div class="c r" style="left:301px;top:32px"></div>
<div class="c h" style="left:0px;top:48px"><span>02:00</span></div>
<div class="c r" style="left:43px;top:48px"></div>
<div class="c r" style="left:86px;top:48px"></div>
<div class="c r" style="left:129px;top:48px"></div>
<div class="c r" style="left:172px;top:48px"></div>
<div class="c r" style="left:215px;top:48px"></div>
<div class="c r" style="left:258px;top:48px"></div>
<div class="c r" style="left:301px;top:48px"></div>
<div class="c h" style="left:0px;top:64px"><span>03:00</span></div>
<div class="c r" style="left:43px;top:64px"></div>
<div class="c r" style="left:86px;top:64px"></div>
<div class="c r" style="left:129px;top:64px"></div>
<div class="c r" style="left:172px;top:64px"></div>
<div class="c r" style="left:215px;top:64px"></div>
<div class="c r" style="left:258px;top:64px"></div>
<div class="c r" style="left:301px;top:64px"></div>
<div class="c h" style="left:0px;top:80px"><span>04:00</span></div>
<div class="c r" style="left:43px;top:80px"></div>
<div class="c r" style="left:86px;top:80px"></div>
<div class="c r" style="left:129px;top:80px"></div>
<div class="c r" style="left:172px;top:80px"></div>
<div class="c r" style="left:215px;top:80px"></div>
<div class="c r" style="left:258px;top:80px"></div>
<div class="c r" style="left:301px;top:80px"></div>
<div class="c h" style="left:0px;top:96px"><span>05:00</span></div>
<div class="c r" style="left:43px;top:96px"></div>
<div class="c r" style="left:86px;top:96px"></div>
<div class="c r" style="left:129px;top:96px"></div>
<div class="c r" style="left:172px;top:96px"></div>
<div class="c r" style="left:215px;top:96px"></div>
<div class="c r" style="left:258px;top:96px"></div>
<div class="c r" style="left:301px;top:96px"></div>
<div class="c h" style="left:0px;top:112px"><span>06:00</span></div>
<div class="c r" style="left:43px;top:112px"></div>
<div class="c r" style="left:86px;top:112px"></div>
<div class="c r" style="left:129px;top:112px"></div>
<div class="c r" style="left:172px;top:112px"></div>
<div class="c r" style="left:215px;top:112px"></div>
<div class="c r" style="left:258px;top:112px"></div>
<div class="c r" style="left:301px;top:112px"></div>
<div class="c h" style="left:0px;top:128px"><span>07:00</span></div>
<div class="c r" style="left:43px;top:128px"></div>
<div class="c r" style="left:86px;top:128px"></div>
<div class="c r" style="left:129px;top:128px"></div>
<div class="c r" style="left:172px;top:128px"></div>
<div class="c r" style="left:215px;top:128px"></div>
<div class="c r" style="left:258px;top:128px"></div>
<div class="c r" style="left:301px;top:128px"></div>
<div class="c h" style="left:0px;top:144px"><span>08:00</span></div>
<div class="c r" style="left:43px;top:144px"></div>
<div class="c r" style="left:86px;top:144px"></div>
<div class="c r" style="left:129px;top:144px"></div>
<div class="c r" style="left:172px;top:144px"></div>
<div class="c r" style="left:215px;top:144px"></div>
<div class="c r" style="left:258px;top:144px"></div>
<div class="c r" style="left:301px;top:144px"></div>
<div class="c h" style="left:0px;top:160px"><span>09:00</span></div>
<div class="c r" style="left:43px;top:160px"></div>
<div class="c r" style="left:86px;top:160px"></div>
<div class="c r" style="left:129px;top:160px"></div>
<div class="c r" style="left:172px;top:160px"></div>
<div class="c r" style="left:215px;top:160px"></div>
<div class="c r" style="left:258px;top:160px"></div>
<div class="c r" style="left:301px;top:160px"></div>
<div class="c h" style="left:0px;top:176px"><span>10:00</span></div>
<div class="c r t" style="left:43px;top:176px"><span>10:10</span></div>
<div class="c r" style="left:86px;top:176px"></div>
<div class="c r" style="left:129px;top:176px"></div>
<div class="c r" style="left:172px;top:176px"></div>
<div class="c r" style="left:215px;top:176px"></div>
<div class="c b" style="left:258px;top:176px"></div>
<div class="c b" style="left:301px;top:176px"></div>
<div class="c h" style="left:0px;top:192px"><span>11:00</span></div>
<div class="c b" style="left:43px;top:192px"></div>
<div class="c b" style="left:86px;top:192px"></div>
<div class="c b" style="left:129px;top:192px"></div>
<div class="c b" style="left:172px;top:192px"></div>
<div class="c b" style="left:215px;top:192px"></div>
<div class="c b" style="left:258px;top:192px"></div>
<div class="c b" style="left:301px;top:192px"></div>
<div class="c h" style="left:0px;top:208px"><span>12:00</span></div>
<div class="c b" style="left:43px;top:208px"></div>
<div class="c b" style="left:86px;top:208px"></div>
<div class="c b" style="left:129px;top:208px"></div>
<div class="c b" style="left:172px;top:208px"></div>
<div class="c b" style="left:215px;top:208px"></div>
<div class="c b" style="left:258px;top:208px"></div>
<div class="c b" style="left:301px;top:208px"></div>
<div class="c h" style="left:0px;top:224px"><span>13:00</span></div>
<div class="c b" style="left:43px;top:224px"></div>
<div class="c b" style="left:86px;top:224px"></div>
<div class="c b" style="left:129px;top:224px"></div>
<div class="c b" style="left:172px;top:224px"></div>
<div class="c b" style="left:215px;top:224px"></div>
<div class="c b" style="left:258px;top:224px"></div>
<div class="c b" style="left:301px;top:224px"></div>
<div class="c h" style="left:0px;top:240px"><span>14:00</span></div>
<div class="c b" style="left:43px;top:240px"></div>
<div class="c b" style="left:86px;top:240px"></div>
<div class="c b" style="left:129px;top:240px"></div>
<div class="c b" style="left:172px;top:240px"></div>
<div class="c b" style="left:215px;top:240px"></div>
<div class="c b" style="left:258px;top:240px"></div>
<div class="c b" style="left:301px;top:240px"></div>
<div class="c h" style="left:0px;top:256px"><span>15:00</span></div>
<div class="c b" style="left:43px;top:256px"></div>
<div class="c b" style="left:86px;top:256px"></div>
<div class="c b" style="left:129px;top:256px"></div>
<div class="c b" style="left:172px;top:256px"></div>
<div class="c b" style="left:215px;top:256px"></div>
<div class="c b" style="left:258px;top:256px"></div>
<div class="c b" style="left:301px;top:256px"></div>
<div class="c h" style="left:0px;top:272px"><span>16:00</span></div>
<div class="c b" style="left:43px;top:272px"></div>
<div class="c b" style="left:86px;top:272px"></div>
<div class="c b" style="left:129px;top:272px"></div>
<div class="c b" style="left:172px;top:272px"></div>
<div class="c b" style="left:215px;top:272px"></div>
<div class="c b" style="left:258px;top:272px"></div>
<div class="c b" style="left:301px;top:272px"></div>
<div class="c h" style="left:0px;top:288px"><span>17:00</span></div>
<div class="c b" style="left:43px;top:288px"></div>
<div class="c b" style="left:86px;top:288px"></div>
<div class="c b" style="left:129px;top:288px"></div>
<div class="c b" style="left:172px;top:288px"></div>
<div class="c b" style="left:215px;top:288px"></div>
<div class="c b" style="left:258px;top:288px"></div>
<div class="c b" style="left:301px;top:288px"></div>
<div class="c h" style="left:0px;top:304px"><span>18:00</span></div>
<div class="c b" style="left:43px;top:304px"></div>
<div class="c b" style="left:86px;top:304px"></div>
<div class="c b" style="left:129px;top:304px"></div>
<div class="c b" style="left:172px;top:304px"></div>
<div class="c b" style="left:215px;top:304px"></div>
<div class="c b" style="left:258px;top:304px"></div>
<div class="c b" style="left:301px;top:304px"></div>
<div class="c h" style="left:0px;top:320px"><span>19:00</span></div>
<div class="c r" style="left:43px;top:320px"></div>
<div class="c r" style="left:86px;top:320px"></div>
<div class="c r" style="left:129px;top:320px"></div>
<div class="c r" style="left:172px;top:320px"></div>
<div class="c r" style="left:215px;top:320px"></div>
<div class="c b" style="left:258px;top:320px"></div>
<div class="c b" style="left:301px;top:320px"></div>
<div class="c h" style="left:0px;top:336px"><span>20:00</span></div>
<div class="c r" style="left:43px;top:336px"></div>
<div class="c r" style="left:86px;top:336px"></div>
<div class="c r" style="left:129px;top:336px"></div>
<div class="c r" style="left:172px;top:336px"></div>
<div class="c r" style="left:215px;top:336px"></div>
<div class="c r" style="left:258px;top:336px"></div>
<div class="c r" style="left:301px;top:336px"></div>
<div class="c h" style="left:0px;top:352px"><span>21:00</span></div>
<div class="c r" style="left:43px;top:352px"></div>
<div class="c r" style="left:86px;top:352px"></div>
<div class="c r" style="left:129px;top:352px"></div>
<div class="c r" style="left:172px;top:352px"></div>
<div class="c r" style="left:215px;top:352px"></div>
<div class="c r" style="left:258px;top:352px"></div>
<div class="c r" style="left:301px;top:352px"></div>
<div class="c h" style="left:0px;top:368px"><span>22:00</span></div>
<div class="c r" style="left:43px;top:368px"></div>
<div class="c r" style="left:86px;top:368px"></div>
<div class="c r" style="left:129px;top:368px"></div>
<div class="c r" style="left:172px;top:368px"></div>
<div class="c r" style="left:215px;top:368px"></div>
<div class="c r" style="left:258px;top:368px"></div>
<div class="c r" style="left:301px;top:368px"></div>
<div class="c h" style="left:0px;top:384px"><span>23:00</span></div>
<div class="c r" style="left:43px;top:384px"></div>
<div class="c r" style="left:86px;top:384px"></div>
<div class="c r" style="left:129px;top:384px"></div>
<div class="c r" style="left:172px;top:384px"></div>
<div class="c r" style="left:215px;top:384px"></div>
<div class="c r" style="left:258px;top:384px"></div>
<div class="c r" style="left:301px;top:384px"></div>
<div class="c h" style="left:0px;top:400px"><span>Max</span></div>
<div class="c g t" style="left:43px;top:400px"><span>00:30</span></div>
<div class="c g t" style="left:86px;top:400px"><span>00:30</span></div>
<div class="c g t" style="left:129px;top:400px"><span>00:30</span></div>
<div class="c g t" style="left:172px;top:400px"><span>00:30</span></div>
<div class="c g t" style="left:215px;top:400px"><span>00:30</span></div>
<div class="c g t" style="left:258px;top:400px"><span>00:30</span></div>
<div class="c g t" style="left:301px;top:400px"><span>00:30</span></div>
<div class="abs" style="left:344px;top:0;width:1px;height:417px;background:#fff"></div><div class="abs" style="left:0;top:416px;width:345px;height:1px;background:#fff"></div>
</div>
<div class="lbl" style="left:619px;top:159px">Quick select a user:</div>
<div class="combo" style="left:619px;top:183px;width:155px">EM</div><div class="arr" style="left:760px;top:192px"></div>
<div class="lbl" style="left:617px;top:223px;letter-spacing:-.2px">Select a template scheme:</div>
<div class="combo" style="left:618px;top:247px;width:155px;padding-left:2px;letter-spacing:-.55px">Child 1 &nbsp; - since 11:00 u</div><div class="arr" style="left:759px;top:256px"></div>
<div class="btn">Save the current scheme</div>
<div id="legend">
<div class="abs b" style="left:1px;top:1px;width:44px;height:14px"></div>
<div class="abs" style="left:0;top:15px;width:45px;height:1px;background:#b8b4a4"></div>
<div class="abs r" style="left:1px;top:17px;width:44px;height:14px"></div>
<div class="abs" style="left:0;top:31px;width:45px;height:1px;background:#b8b4a4"></div>
<div class="abs g" style="left:0;top:32px;width:45px;height:15px"></div>
</div>
<div class="lbl" style="left:669px;top:553px">- Allow</div>
<div class="lbl" style="left:669px;top:569px">- Disallow</div>
<div class="lbl" style="left:669px;top:586px">- Time duration</div>
<div class="abs" style="left:4px;top:622px;width:778px;height:2px;background:#fbf8e8"></div>
<div class="abs" style="left:4px;top:624px;width:778px;height:1px;background:#aca899"></div>
<div class="abs" style="left:4px;top:640px;width:778px;height:1px;background:#fff"></div>
<div class="abs" style="left:4px;top:624px;width:1px;height:16px;background:#9d9a8c"></div><div class="abs" style="left:781px;top:622px;width:1px;height:19px;background:#fff"></div>
<div class="abs" style="left:768px;top:627px"><svg width="13" height="13" viewBox="0 0 13 13" style="display:block;overflow:visible"><path d="M2.5 13L13 2.5M6.5 13L13 6.5M10.5 13L13 10.5" stroke="#a9a698" stroke-width="1.5"/><path d="M1.4 13L13 1.4M5.4 13L13 5.4M9.4 13L13 9.4" stroke="#fff" stroke-width="1"/></svg></div>
</body></html>
